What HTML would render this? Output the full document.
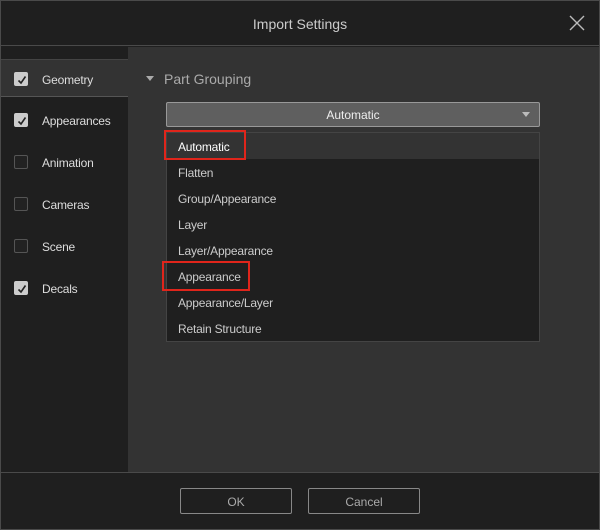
<!DOCTYPE html>
<html><head><style>
*{margin:0;padding:0;box-sizing:border-box}
body{width:600px;height:530px;background:#1f1f1f;font-family:"Liberation Sans",sans-serif;font-size:12px;color:#ddd;position:relative;overflow:hidden}
.frame{position:absolute;inset:0;border:1px solid #4a4a4a;pointer-events:none}
.title{position:absolute;left:0;top:0;width:600px;height:46px;border-bottom:1px solid #4a4a4a;text-align:center;line-height:48px;font-size:14px;color:#ccc}
.side{position:absolute;left:1px;top:47px;width:127px;height:425px;background:#1f1f1f}
.main{position:absolute;left:128px;top:47px;width:471px;height:425px;background:#333}
.row{position:absolute;left:1px;width:127px;height:38px;line-height:40px;padding-left:41px;color:#ddd;letter-spacing:-0.2px}
.row.sel{background:#333;border-top:1px solid #444;border-bottom:1px solid #555}
.cb{position:absolute;left:13px;top:12px;width:14px;height:14px;border:1px solid #555;border-radius:2px;background:#222}
.cb.on{background:#ccc;border-color:#ccc}
.cb.on svg{position:absolute;left:1px;top:1px}
.foot{position:absolute;left:0;top:472px;width:600px;height:58px;border-top:1px solid #4a4a4a;background:#1f1f1f}
.btn{position:absolute;top:488px;width:112px;height:26px;border:1px solid #888;border-radius:2px;text-align:center;line-height:26px;color:#aaa;font-size:12px}
.dd{position:absolute;left:166px;top:102px;width:374px;height:25px;background:#5f5f5f;border:1px solid #999;border-radius:2px;text-align:center;line-height:25px;color:#eee}
.list{position:absolute;left:166px;top:132px;width:374px;height:210px;background:#1f1f1f;border:1px solid #444}
.it{height:26px;line-height:28px;padding-left:11px;color:#ccc;letter-spacing:-0.2px}
.it.h{background:#333;color:#fff}
.red{position:absolute;border:2px solid #e0251b}
</style></head><body>
<div class="title">Import Settings</div>
<svg style="position:absolute;left:569px;top:15px" width="16" height="16"><path d="M1 1L15 15M15 1L1 15" stroke="#bbb" stroke-width="1.4"/></svg>
<div class="side"></div>
<div class="main"></div>
<div class="row sel" style="top:59px"><span class="cb on"><svg width="12" height="12"><path d="M2.5 6.5L5 9L9.5 2.5" stroke="#222" stroke-width="1.6" fill="none"/></svg></span>Geometry</div>
<div class="row" style="top:101px"><span class="cb on"><svg width="12" height="12"><path d="M2.5 6.5L5 9L9.5 2.5" stroke="#222" stroke-width="1.6" fill="none"/></svg></span>Appearances</div>
<div class="row" style="top:143px"><span class="cb"></span>Animation</div>
<div class="row" style="top:185px"><span class="cb"></span>Cameras</div>
<div class="row" style="top:227px"><span class="cb"></span>Scene</div>
<div class="row" style="top:269px"><span class="cb on"><svg width="12" height="12"><path d="M2.5 6.5L5 9L9.5 2.5" stroke="#222" stroke-width="1.6" fill="none"/></svg></span>Decals</div>
<svg style="position:absolute;left:146px;top:76px" width="9" height="6"><path d="M0 0H8L4 5Z" fill="#aaa"/></svg>
<div style="position:absolute;left:164px;top:71px;font-size:14px;color:#aaa">Part Grouping</div>
<div class="dd">Automatic</div>
<svg style="position:absolute;left:522px;top:112px" width="9" height="6"><path d="M0 0H8L4 5Z" fill="#bbb"/></svg>
<div class="list">
<div class="it h">Automatic</div><div class="it">Flatten</div><div class="it">Group/Appearance</div><div class="it">Layer</div><div class="it">Layer/Appearance</div><div class="it">Appearance</div><div class="it">Appearance/Layer</div><div class="it">Retain Structure</div>
</div>
<div class="red" style="left:164px;top:130px;width:82px;height:30px"></div>
<div class="red" style="left:162px;top:261px;width:88px;height:30px"></div>
<div class="foot"></div>
<div class="btn" style="left:180px">OK</div>
<div class="btn" style="left:308px">Cancel</div>
<div class="frame"></div>
</body></html>
